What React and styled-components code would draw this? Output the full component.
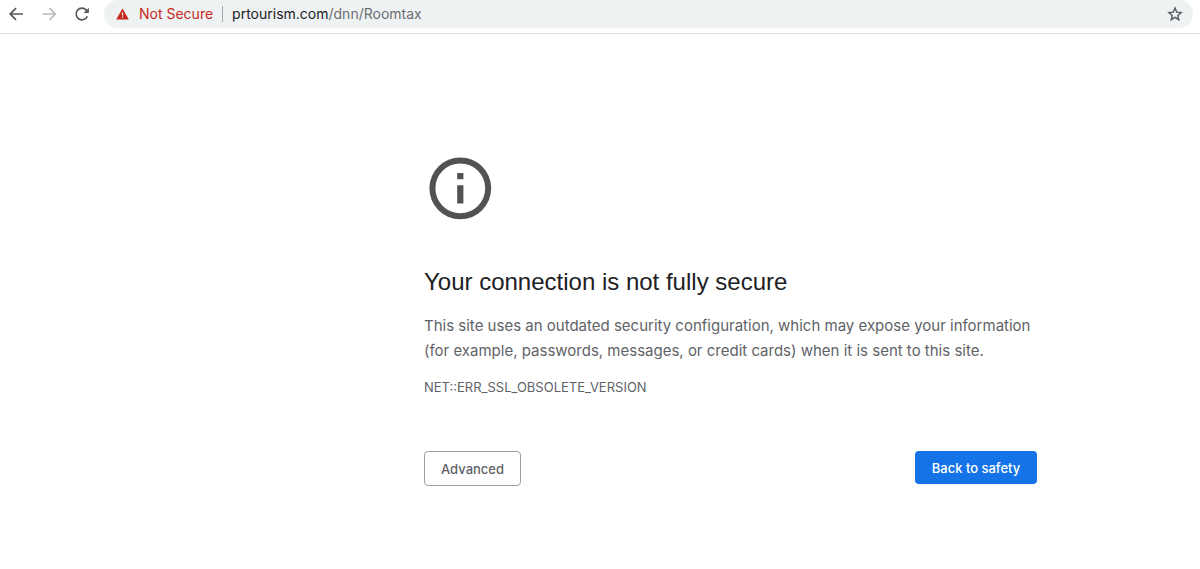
import React from "react";
import styled, { createGlobalStyle } from "styled-components";

const GlobalStyle = createGlobalStyle`
  *, *::before, *::after { box-sizing: border-box; }
  body {
    margin: 0;
    background: #fff;
    font-family: Inter, "Liberation Sans", sans-serif;
    -webkit-font-smoothing: antialiased;
  }
  button, input { font-family: inherit; }
`;

const Toolbar = styled.header`
  display: flex;
  align-items: flex-start;
  height: 34px;
  padding: 0 7px 0 6px;
  border-bottom: 1px solid #dcdddf;
`;

const NavButtons = styled.nav`
  display: flex;
  gap: 13px;
  height: 28px;
  align-items: center;
  margin-right: 12px;
`;

const IconButton = styled.button`
  display: flex;
  align-items: center;
  justify-content: center;
  width: 20px;
  height: 20px;
  padding: 0;
  border: 0;
  background: none;
  color: ${(p) => (p.disabled ? "#b9bbbd" : "#55585c")};
`;

const AddressBar = styled.div`
  display: flex;
  flex: 1;
  align-items: center;
  height: 28px;
  padding: 0 8px 0 12px;
  border-radius: 14px;
  background: #eff2f3;
  font-size: 14px;
  line-height: 20px;
`;

const SecurityButton = styled.button`
  display: flex;
  align-items: center;
  gap: 10px;
  height: 16px;
  padding: 0 9px 0 0;
  border: 0;
  border-right: 1px solid #a5a8ab;
  background: none;
  color: #c5281c;
  font-size: 14px;
  line-height: 16px;
`;

const UrlField = styled.div`
  display: grid;
  flex: 1;
  align-items: center;
  margin-left: 9px;
  > * { grid-area: 1 / 1; }
`;

const UrlInput = styled.input`
  width: 100%;
  padding: 0;
  border: 0;
  outline: 0;
  background: none;
  color: transparent;
  caret-color: #202124;
  font-size: 14px;
  line-height: 20px;
`;

const UrlText = styled.span`
  color: #6b6e72;
  pointer-events: none;
`;

const Host = styled.span`
  color: #202124;
`;

const Main = styled.main`
  width: min(613px, 100%);
  margin: 117px 0 0 clamp(0px, calc(100vw - 776px), 424px);
`;

const InfoIcon = styled.svg`
  display: block;
  width: 73px;
  height: 74px;
`;

const Title = styled.h1`
  margin: 42px 0 0;
  color: #202124;
  font-family: "Liberation Sans", Arial, sans-serif;
  font-size: 24px;
  font-weight: 400;
  line-height: 30px;
`;

const Message = styled.p`
  margin: 16px 0 0;
  color: #5f6368;
  font-size: 15px;
  line-height: 25px;
`;

const ErrorCode = styled.p`
  margin: 14px 0 0;
  color: #5f6368;
  font-size: 13px;
  line-height: 20px;
`;

const Actions = styled.div`
  display: flex;
  align-items: flex-start;
  justify-content: space-between;
  margin-top: 54px;
`;

const ActionButton = styled.button`
  height: ${(p) => (p.$primary ? 33 : 35)}px;
  min-width: ${(p) => (p.$primary ? 122 : 97)}px;
  padding: 0 16px;
  border: ${(p) => (p.$primary ? "0" : "1px solid #9aa0a6")};
  border-radius: 4px;
  background: ${(p) => (p.$primary ? "#1473e6" : "#fff")};
  color: ${(p) => (p.$primary ? "#fff" : "#5f6368")};
  font-size: 13px;
  font-weight: 500;
  line-height: 20px;
`;

const stroke = { fill: "none", stroke: "currentColor", strokeWidth: 1.7 };

export default function App() {
  return (
    <>
      <GlobalStyle />
      <Toolbar>
        <NavButtons aria-label="Browser navigation">
          <IconButton aria-label="Back">
            <svg width="20" height="20" viewBox="0 0 20 20">
              <path d="M17 10H4.5M10 4.2 4.2 10l5.8 5.8" {...stroke} />
            </svg>
          </IconButton>
          <IconButton aria-label="Forward" disabled>
            <svg width="20" height="20" viewBox="0 0 20 20">
              <path d="M3.5 10H16M10.5 4.2l5.8 5.8-5.8 5.8" {...stroke} />
            </svg>
          </IconButton>
          <IconButton aria-label="Reload">
            <svg width="20" height="20" viewBox="0 0 20 20">
              <path d="M15.3 12.3a5.8 5.8 0 1 1-1-6.2L15.6 7.6" {...stroke} />
              <path d="M16.9 3.8v5.3h-5.3z" fill="currentColor" />
            </svg>
          </IconButton>
        </NavButtons>
        <AddressBar>
          <SecurityButton>
            <svg width="13" height="12" viewBox="0 0 13 12">
              <path d="M6.5.5 12.8 11.5H.2z" fill="currentColor" />
              <path d="M5.9 4.4h1.2v3H5.9zM5.9 8.5h1.2v1.3H5.9z" fill="#fff" />
            </svg>
            Not Secure
          </SecurityButton>
          <UrlField>
            <UrlInput aria-label="Address" defaultValue="prtourism.com/dnn/Roomtax" />
            <UrlText aria-hidden="true">
              <Host>prtourism.com</Host>/dnn/Roomtax
            </UrlText>
          </UrlField>
          <IconButton aria-label="Bookmark this page">
            <svg width="20" height="20" viewBox="0 0 20 20">
              <path
                d="M10 4l1.7 4.1 4.4.4-3.3 2.9 1 4.3-3.8-2.3-3.8 2.3 1-4.3-3.3-2.9 4.4-.4z"
                fill="none"
                stroke="currentColor"
                strokeWidth="1.4"
              />
            </svg>
          </IconButton>
        </AddressBar>
      </Toolbar>
      <Main>
        <InfoIcon viewBox="0 0 73 74" aria-hidden="true">
          <circle cx="36.3" cy="37.3" r="27.9" fill="none" stroke="#525252" strokeWidth="6" />
          <path d="M33.2 22h6.2v6.2h-6.2zM33.2 34.2h6.2v18.4h-6.2z" fill="#525252" />
        </InfoIcon>
        <Title>Your connection is not fully secure</Title>
        <Message>
          This site uses an outdated security configuration, which may expose your information
          (for example, passwords, messages, or credit cards) when it is sent to this site.
        </Message>
        <ErrorCode>NET::ERR_SSL_OBSOLETE_VERSION</ErrorCode>
        <Actions>
          <ActionButton>Advanced</ActionButton>
          <ActionButton $primary>Back to safety</ActionButton>
        </Actions>
      </Main>
    </>
  );
}
